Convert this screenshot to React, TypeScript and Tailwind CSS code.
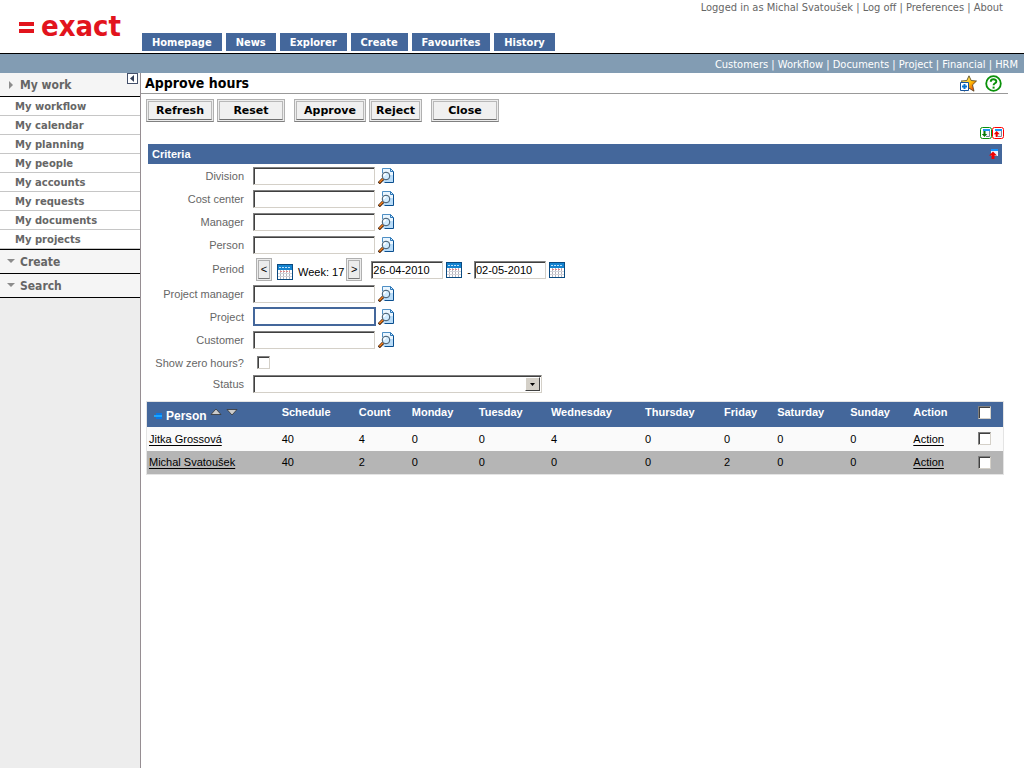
import React from 'react';

const tabs = ['Homepage', 'News', 'Explorer', 'Create', 'Favourites', 'History'];
const userLinks = ['Log off', 'Preferences', 'About'];
const moduleLinks = ['Customers', 'Workflow', 'Documents', 'Project', 'Financial', 'HRM'];
const workLinks = [
  'My workflow',
  'My calendar',
  'My planning',
  'My people',
  'My accounts',
  'My requests',
  'My documents',
  'My projects',
];
const days = ['Monday', 'Tuesday', 'Wednesday', 'Thursday', 'Friday', 'Saturday', 'Sunday'];
const people = [
  { name: 'Jitka Grossová', schedule: 40, count: 4, hours: [0, 0, 4, 0, 0, 0, 0] },
  { name: 'Michal Svatoušek', schedule: 40, count: 2, hours: [0, 0, 0, 0, 2, 0, 0] },
];

const sunken =
  'border border-t-[#808080] border-l-[#808080] border-r-[#d4d0c8] border-b-[#d4d0c8] bg-white shadow-[inset_1px_1px_0_#404040]';

const LookupIcon = () => (
  <svg width="16" height="16" viewBox="0 0 16 16">
    <path d="M4.5 .5h8l3 3v11h-11z" fill="#b9dcf8" />
    <path d="M5 1h7v3h3v3H5z" fill="#eaf6ff" />
    <path d="M4.5 5V.5h8" fill="none" stroke="#4f8fc4" />
    <path d="M15.500 3.500v11h-9" fill="none" stroke="#0b4f8f" />
    <path d="M12.500 .5v3h3z" fill="#cfe8fb" stroke="#2f78b8" />
    <circle cx="8" cy="8" r="3.800" fill="#d2ecff" stroke="#3f5568" />
    <path d="M6 8a2 2 0 0 1 2-2" fill="none" stroke="#fff" strokeWidth="1.5" />
    <path d="M5 11L.8 15.200" stroke="#3a1600" strokeWidth="3" />
    <path d="M4.800 11L1.300 14.500" stroke="#f58220" strokeWidth="1.600" />
  </svg>
);

const CalendarIcon = () => (
  <svg width="16" height="16" viewBox="0 0 16 16" shapeRendering="crispEdges">
    <rect width="16" height="16" fill="#0a4a80" />
    <rect x="1" y="1" width="14" height="5" fill="#1583cf" />
    <path d="M2 3.5h12" stroke="#bfe3fb" strokeDasharray="2 1" />
    <rect x="1" y="6" width="14" height="9" fill="#fff" />
    <path d="M3.5 6v9M6.5 6v9M9.5 6v9M12.5 6v9" stroke="#b4b4bc" />
    <path d="M1 9.500h14M1 12.500h14" stroke="#d4d4da" />
    <path d="M3 7.5h10" stroke="#e08a8a" strokeDasharray="2 1" />
  </svg>
);

const StarIcon = () => (
  <svg width="17" height="17" viewBox="0 0 17 17">
    <defs>
      <linearGradient id="star" x1="0" y1="0" x2="1" y2="1">
        <stop offset="0.25" stopColor="#ffe45c" />
        <stop offset="0.55" stopColor="#ffb800" />
        <stop offset="0.9" stopColor="#e63c1c" />
      </linearGradient>
    </defs>
    <path d="M9 .8l2.200 4.700 5.300.5-4 3.900 1.500 6.300-5-3-4.800 3 1-6.300L1.200 6l5.600-.5z" fill="url(#star)" stroke="#4d3d16" strokeWidth=".8" />
    <path d="M.5 7.5h8v8h-8z" fill="#fff" stroke="#17539a" />
    <path d="M4.500 9v5M2 11.500h5" stroke="#0874d1" strokeWidth="2" />
  </svg>
);

const HelpIcon = () => (
  <svg width="17" height="17" viewBox="0 0 17 17">
    <circle cx="8.5" cy="8.5" r="7.3" fill="#fff" stroke="#0a910a" strokeWidth="1.8" />
    <path d="M5.8 6.7c0-3.2 5.5-3.1 5.5-.2 0 1.9-2.7 1.7-2.7 3.8" fill="none" stroke="#0a910a" strokeWidth="2" />
    <path d="M7.6 11.6h2v2h-2z" fill="#0a910a" />
  </svg>
);

const WindowIcon = ({ down = false }: { down?: boolean }) => (
  <svg width="12" height="12" viewBox="0 0 12 12">
    <rect x=".5" y=".5" width="11" height="11" rx="2" fill="#fff" stroke={down ? '#0a910a' : '#f00'} />
    <path d="M3 2h7v7H3z" fill="#eef3f9" />
    <path d="M9.500 4v5.500H6" fill="none" stroke="#7d8798" />
    <path d="M3 2h7v2H3z" fill="#1b96f5" />
    {down ? (
      <path d="M3.500 4h2v3h1.700L4.500 10 1.800 7h1.700z" fill="#087808" />
    ) : (
      <path d="M4.700 4l3 3.200H5.700V10h-2V7.200h-2z" fill="#f00000" />
    )}
  </svg>
);

const CollapseIcon = () => (
  <svg width="9" height="10" viewBox="0 0 9 10">
    <path d="M2 0h7v7H2z" fill="#e8f4ff" />
    <path d="M2 0h7v2H2z" fill="#1593ff" />
    <path d="M4 2.500l4 4H5.500V10h-3V6.500H0z" fill="#f00000" />
  </svg>
);

const Lookup = ({ label }: { label: string }) => (
  <button type="button" aria-label={`Find ${label}`} className="ml-[3px]">
    <LookupIcon />
  </button>
);

const Separated = ({ items }: { items: string[] }) => (
  <>
    {items.map((item, i) => (
      <React.Fragment key={item}>
        {i > 0 && ' | '}
        <a href="#">{item}</a>
      </React.Fragment>
    ))}
  </>
);

interface FieldRowProps {
  label: string;
  id: string;
  children: React.ReactNode;
  height?: string;
}

const FieldRow = ({ label, id, children, height = 'h-[23px]' }: FieldRowProps) => (
  <div className={`flex items-center ${height}`}>
    <label htmlFor={id} className="w-[96px] mr-[9px] text-right text-[#666] whitespace-nowrap">
      {label}
    </label>
    {children}
  </div>
);

const TextRow = ({ label, id, active = false }: { label: string; id: string; active?: boolean }) => (
  <FieldRow label={label} id={id}>
    <input
      id={id}
      type="text"
      className={`px-[2px] outline-none ${
        active ? 'w-[123px] h-[19px] border-2 border-[#44679b] bg-white -mr-px' : `w-[122px] h-[18px] ${sunken}`
      }`}
    />
    <Lookup label={label} />
  </FieldRow>
);

const Check = ({ id, label }: { id?: string; label?: string }) => (
  <input
    id={id}
    type="checkbox"
    aria-label={label}
    className={`appearance-none block w-[13px] h-[13px] checked:bg-[#44679b] ${sunken}`}
  />
);

const PushButton = ({ label, width }: { label: string; width: string }) => (
  <button
    type="button"
    className={`${width} h-[23px] border border-[#b0b0b0] border-b-[#808080] bg-[#ececec] p-px font-['DejaVu_Sans','Verdana',sans-serif] text-[11px] font-bold text-black`}
  >
    <span className="flex h-full items-center justify-center border border-[#b8b8b8] border-b-[#707070] bg-[#f0f0f0] pt-px">
      {label}
    </span>
  </button>
);

const StepButton = ({ children, label }: { children: React.ReactNode; label: string }) => (
  <button type="button" aria-label={label} className="w-4 h-[23px] border border-[#b0b0b0] bg-[#ececec] p-px text-[11px]">
    <span className="flex h-full items-center justify-center border border-[#b0b0b0] border-b-[#777]">{children}</span>
  </button>
);

const DateField = ({ id, label, value }: { id: string; label: string; value: string }) => (
  <>
    <input id={id} aria-label={label} type="text" defaultValue={value} className={`mt-[2px] w-[72px] h-[18px] px-px outline-none ${sunken}`} />
    <button type="button" aria-label={`Pick ${label}`} className="ml-[3px] mt-[2px]">
      <CalendarIcon />
    </button>
  </>
);

const SectionHead = ({ title, open = false }: { title: string; open?: boolean }) => (
  <a href="#" className="flex items-center h-[23px] bg-[#f5f5f5] pl-[7px] text-[12px] font-bold text-[#666]">
    <svg width="8" height="8" viewBox="0 0 8 8" className="mr-[5px]">
      <path d={open ? 'M2 0l4 4-4 4z' : 'M0 1h8L4 5z'} fill="#8c8c8c" />
    </svg>
    {title}
  </a>
);

const Sidebar = () => (
  <aside className="w-[141px] shrink-0 border-r border-[#968e92] bg-[#ededed] font-['DejaVu_Sans_Condensed','DejaVu_Sans',sans-serif]">
    <div className="relative border-b border-black">
      <SectionHead title="My work" open />
      <button type="button" aria-label="Hide menu" className="absolute right-[2px] top-0 w-[11px] h-[11px] border border-[#44506a] bg-white">
        <svg width="9" height="9" viewBox="0 0 9 9">
          <path d="M6 1v7L2 4.500z" fill="#333f58" />
        </svg>
      </button>
    </div>
    <ul className="bg-white font-['DejaVu_Sans','Verdana',sans-serif] text-[10px] font-bold text-[#666]">
      {workLinks.map((item) => (
        <li key={item} className="h-[19px] border-b border-[#c6c6c6] pl-[15px] leading-5">
          <a href="#">{item}</a>
        </li>
      ))}
    </ul>
    <div className="border-y border-black">
      <SectionHead title="Create" />
    </div>
    <div className="border-b border-black">
      <SectionHead title="Search" />
    </div>
  </aside>
);

const HoursTable = () => (
  <table className="w-full table-fixed border border-[#e4e4e4] text-left">
    <colgroup>
      <col className="w-[132px]" />
      <col className="w-[77px]" />
      <col className="w-[53px]" />
      <col className="w-[67px]" />
      <col className="w-[72px]" />
      <col className="w-[94px]" />
      <col className="w-[79px]" />
      <col className="w-[53px]" />
      <col className="w-[73px]" />
      <col className="w-[63px]" />
      <col className="w-[65px]" />
      <col className="w-[28px]" />
    </colgroup>
    <thead>
      <tr className="h-[25px] bg-[#44679b] align-top leading-5 text-white">
        <th className="pl-[7px] pt-1">
          <span className="flex items-center text-[12px]">
            <svg width="8" height="6" viewBox="0 0 8 6" className="mr-1">
              <path d="M2 0h6v6H2z" fill="#0877e8" />
              <path d="M0 2h8v2H0z" fill="#1ba4ff" />
            </svg>
            Person
            <button type="button" aria-label="Sort ascending" className="ml-[3px] mb-2">
              <svg width="12" height="8" viewBox="0 0 12 8" className="block">
                <path d="M6 1l5 5.500H1z" fill="#ccc" stroke="#333" strokeWidth=".8" />
              </svg>
            </button>
            <button type="button" aria-label="Sort descending" className="ml-1 mb-2">
              <svg width="12" height="8" viewBox="0 0 12 8" className="block">
                <path d="M6 7L1 1.500h10z" fill="#ccc" stroke="#333" strokeWidth=".8" />
              </svg>
            </button>
          </span>
        </th>
        {['Schedule', 'Count', ...days, 'Action'].map((name) => (
          <th key={name} className="pl-[3px]">
            {name}
          </th>
        ))}
        <th className="pl-[3px] pt-1">
          <Check label="Select all" />
        </th>
      </tr>
    </thead>
    <tbody>
      {people.map((person) => (
        <tr key={person.name} className="h-6 bg-[#fafafa] even:bg-[#b5b5b5]">
          <td className="pl-[2px] whitespace-nowrap">
            <a href="#" className="underline underline-offset-2">
              {person.name}
            </a>
          </td>
          {[person.schedule, person.count, ...person.hours].map((value, i) => (
            <td key={i} className="pl-[3px]">
              {value}
            </td>
          ))}
          <td className="pl-[3px]">
            <a href="#" className="underline underline-offset-2">
              Action
            </a>
          </td>
          <td className="pl-[3px]">
            <Check label={`Select ${person.name}`} />
          </td>
        </tr>
      ))}
    </tbody>
  </table>
);

const App: React.FC = () => {
  return (
    <div className="flex min-h-screen flex-col bg-white font-['Liberation_Sans','Arial',sans-serif] text-[11px] leading-[14px] text-black">
      <header className="font-['DejaVu_Sans_Condensed','DejaVu_Sans',sans-serif]">
        <div className="flex h-[53px] justify-between">
          <div className="flex">
            <a href="#" className="flex w-[142px] items-center pl-[18px] text-[29px] font-bold leading-none text-[#e2141d]">
              <svg width="17" height="13" viewBox="0 0 17 13" className="mr-[6px] mt-[2px]">
                <path d="M1 1h15v4H1zM1 8h15v4H1z" fill="#e2141d" />
              </svg>
              exact
            </a>
            <nav className="flex items-end gap-1 pb-[2px]">
              {tabs.map((tab) => (
                <a key={tab} href="#" className="h-[18px] bg-[#44679b] px-[10px] text-[11px] font-bold leading-5 text-white">
                  {tab}
                </a>
              ))}
            </nav>
          </div>
          <div className="pr-[21px] pt-px text-[#666]">
            Logged in as Michal Svatoušek | <Separated items={userLinks} />
          </div>
        </div>
        <nav className="h-5 border-t border-black bg-[#829cb3] pr-[6px] text-right leading-[21px] text-white">
          <Separated items={moduleLinks} />
        </nav>
      </header>

      <div className="flex flex-1">
        <Sidebar />
        <main className="min-w-0 flex-1 pr-4">
          <div className="flex h-[21px] items-center justify-between border-b border-[#999] pl-1 pr-[6px]">
            <h1 className="font-['DejaVu_Sans_Condensed','DejaVu_Sans',sans-serif] text-[14px] font-bold">Approve hours</h1>
            <div className="flex gap-2">
              <button type="button" aria-label="Add to favourites">
                <StarIcon />
              </button>
              <button type="button" aria-label="Help">
                <HelpIcon />
              </button>
            </div>
          </div>

          {/* Toolbar */}
          <div className="flex gap-[9px] pl-[5px] pt-[5px]">
            <div className="flex gap-[3px]">
              <PushButton label="Refresh" width="w-[68px]" />
              <PushButton label="Reset" width="w-[68px]" />
            </div>
            <div className="flex gap-[3px]">
              <PushButton label="Approve" width="w-[72px]" />
              <PushButton label="Reject" width="w-[53px]" />
            </div>
            <PushButton label="Close" width="w-[68px]" />
          </div>

          <div className="flex justify-end pr-1 pt-[5px] pb-[5px]">
            <button type="button" aria-label="Expand all">
              <WindowIcon down />
            </button>
            <button type="button" aria-label="Collapse all">
              <WindowIcon />
            </button>
          </div>

          {/* Criteria */}
          <section className="pl-[7px] pr-[6px]">
            <div className="flex h-5 items-center justify-between bg-[#44679b] pl-1 pr-1 text-white">
              <h2 className="font-bold">Criteria</h2>
              <button type="button" aria-label="Collapse criteria">
                <CollapseIcon />
              </button>
            </div>
            <form onSubmit={(e) => e.preventDefault()}>
              <TextRow label="Division" id="division" />
              <TextRow label="Cost center" id="cost-center" />
              <TextRow label="Manager" id="manager" />
              <TextRow label="Person" id="person" />
              <FieldRow label="Period" id="date-from" height="h-[26px]">
                <div className="ml-[3px] flex items-center">
                  <StepButton label="Previous week">&lt;</StepButton>
                  <button type="button" aria-label="Pick week" className="ml-[5px] mt-[6px]">
                    <CalendarIcon />
                  </button>
                  <span className="ml-[5px] mr-[2px] mt-[6px]">Week: 17</span>
                  <StepButton label="Next week">&gt;</StepButton>
                </div>
                <div className="ml-[9px] flex items-center">
                  <DateField id="date-from" label="From date" value="26-04-2010" />
                  <span className="ml-[5px] mr-[3px] mt-[6px]">-</span>
                  <DateField id="date-to" label="To date" value="02-05-2010" />
                </div>
              </FieldRow>
              <TextRow label="Project manager" id="project-manager" />
              <TextRow label="Project" id="project" active />
              <TextRow label="Customer" id="customer" />
              <FieldRow label="Show zero hours?" id="zero-hours">
                <div className="ml-1">
                  <Check id="zero-hours" />
                </div>
              </FieldRow>
              <FieldRow label="Status" id="status" height="h-[20px]">
                <div className="relative">
                  <select id="status" className={`block h-[18px] w-[289px] appearance-none outline-none ${sunken}`}>
                    <option></option>
                  </select>
                  <span className="pointer-events-none absolute right-[2px] top-[2px] flex h-[14px] w-[15px] items-center justify-center border border-t-white border-l-white border-r-[#404040] border-b-[#404040] bg-[#d4d0c8]">
                    <svg width="5" height="3" viewBox="0 0 5 3">
                      <path d="M0 0h5L2.500 3z" fill="#000" />
                    </svg>
                  </span>
                </div>
              </FieldRow>
            </form>
          </section>

          <div className="pl-[5px] pr-1 pt-[7px]">
            <HoursTable />
          </div>
        </main>
      </div>
    </div>
  );
};

export default App;
